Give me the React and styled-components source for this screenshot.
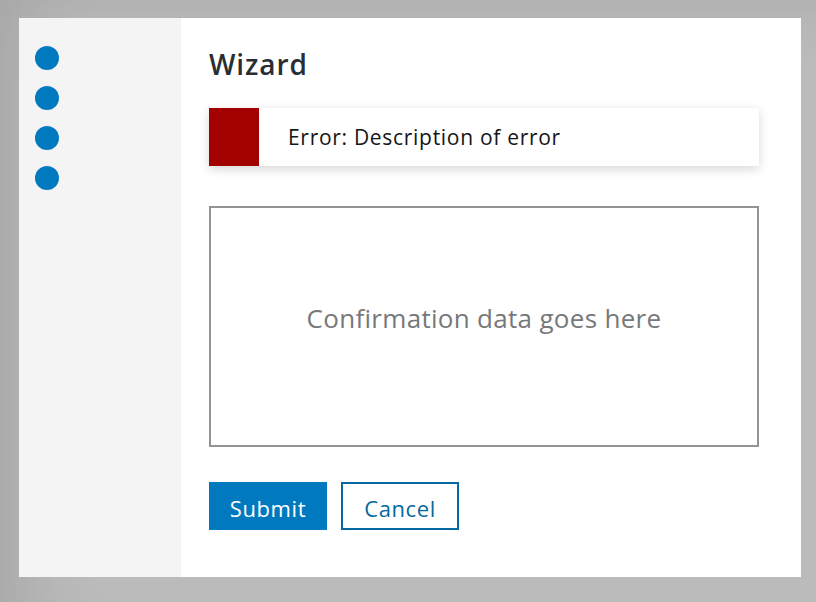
import React from "react";
import styled, { createGlobalStyle } from "styled-components";

const Global = createGlobalStyle`
  html, body { margin: 0; padding: 0; }
  body {
    width: 816px;
    height: 602px;
    overflow: hidden;
    background: #bbbbbb;
    box-shadow: inset 60px 30px 80px -40px rgba(0,0,0,0.12);
    font-family: "Open Sans", "Noto Sans", sans-serif;
  }
`;

const Page = styled.div`
  padding: 18px 15px 25px 19px;
  box-sizing: border-box;
  width: 816px;
  height: 602px;
`;

const Card = styled.div`
  display: flex;
  height: 559px;
  background: #ffffff;
`;

const Sidebar = styled.nav`
  width: 162px;
  flex-shrink: 0;
  background: #f4f4f4;
  padding: 28px 0 0 16px;
  box-sizing: border-box;
  display: flex;
  flex-direction: column;
  gap: 16px;
`;

const Dot = styled.span`
  display: block;
  width: 24px;
  height: 24px;
  border-radius: 50%;
  background: #0079bf;
`;

const Main = styled.main`
  flex: 1;
  padding: 27px 42px 0 28px;
  display: flex;
  flex-direction: column;
`;

const Title = styled.h1`
  margin: 0;
  font-size: 28px;
  line-height: 38px;
  font-weight: 600;
  letter-spacing: 0.9px;
  color: #292e34;
`;

const Alert = styled.div`
  margin-top: 25px;
  height: 58px;
  display: flex;
  align-items: center;
  background: #fff;
  box-shadow: 0 3px 10px rgba(0,0,0,0.16);
`;

const AlertIcon = styled.div`
  width: 50px;
  align-self: stretch;
  background: #a30000;
`;

const AlertText = styled.span`
  padding-left: 29px;
  font-size: 21px;
  letter-spacing: 0.7px;
  color: #151515;
`;

const Confirm = styled.div`
  margin-top: 40px;
  height: 241px;
  box-sizing: border-box;
  border: 2px solid #939393;
  padding-bottom: 18px;
  display: flex;
  align-items: center;
  justify-content: center;
  font-size: 26px;
  letter-spacing: 0.3px;
  color: #76787b;
`;

const Actions = styled.div`
  margin-top: 35px;
  display: flex;
  gap: 14px;
`;

const Button = styled.button`
  width: 118px;
  height: 48px;
  box-sizing: border-box;
  font-family: inherit;
  font-size: 22px;
  letter-spacing: 0.6px;
  cursor: pointer;
  background: ${p => (p.$primary ? "#0079bf" : "#ffffff")};
  color: ${p => (p.$primary ? "#ffffff" : "#0568a0")};
  border: 2px solid ${p => (p.$primary ? "#0079bf" : "#0568a0")};
  padding: 3px 0 0;
`;

export default function App() {
  return (
    <>
      <Global />
      <Page>
        <Card>
          <Sidebar>
            <Dot />
            <Dot />
            <Dot />
            <Dot />
          </Sidebar>
          <Main>
            <Title>Wizard</Title>
            <Alert>
              <AlertIcon />
              <AlertText>Error: Description of error</AlertText>
            </Alert>
            <Confirm>Confirmation data goes here</Confirm>
            <Actions>
              <Button $primary>Submit</Button>
              <Button>Cancel</Button>
            </Actions>
          </Main>
        </Card>
      </Page>
    </>
  );
}
